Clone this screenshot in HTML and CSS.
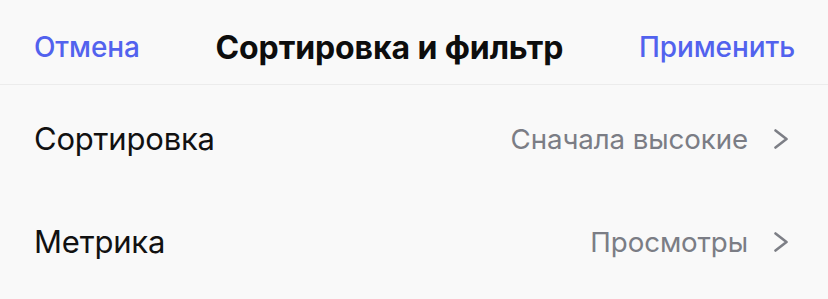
FILE: index.html
```html
<!DOCTYPE html>
<html lang="ru">
<head>
<meta charset="utf-8">
<link rel="stylesheet" href="styles.css">
</head>
<body>
<div class="sheet">
  <header class="nav">
    <span class="nav-btn">Отмена</span>
    <span class="nav-title">Сортировка и фильтр</span>
    <span class="nav-btn">Применить</span>
  </header>
  <div class="list">
    <div class="row">
      <span class="row-label">Сортировка</span>
      <span class="row-value">Сначала высокие
        <svg class="chev" viewBox="0 0 16 20" width="16" height="20"><path d="M2.5 1.5 L13.5 10 L2.5 18.5" fill="none" stroke="#7d7f86" stroke-width="2.6" stroke-linecap="round" stroke-linejoin="round"/></svg>
      </span>
    </div>
    <div class="row">
      <span class="row-label">Метрика</span>
      <span class="row-value">Просмотры
        <svg class="chev" viewBox="0 0 16 20" width="16" height="20"><path d="M2.5 1.5 L13.5 10 L2.5 18.5" fill="none" stroke="#7d7f86" stroke-width="2.6" stroke-linecap="round" stroke-linejoin="round"/></svg>
      </span>
    </div>
  </div>
</div>
</body>
</html>
```

FILE: styles.css
```css
html, body {
  margin: 0;
  padding: 0;
  background: #f9f9f9;
}
body {
  font-family: Inter, "Noto Sans", "Liberation Sans", sans-serif;
  width: 828px;
  height: 299px;
  overflow: hidden;
}
.sheet {
  display: flex;
  flex-direction: column;
}
.nav {
  height: 85px;
  box-sizing: border-box;
  display: flex;
  align-items: center;
  justify-content: space-between;
  padding: 10px 33px 0 34px;
  border-bottom: 1px solid #ececec;
}
.nav-btn {
  color: #5262ee;
  font-size: 28px;
  font-weight: 500;
  letter-spacing: -0.1px;
}
.nav-title {
  color: #0d0d0d;
  font-size: 32px;
  font-weight: 700;
  letter-spacing: -0.1px;
}
.list {
  display: flex;
  flex-direction: column;
  padding-top: 2px;
}
.row {
  height: 103px;
  display: flex;
  align-items: center;
  justify-content: space-between;
  padding: 0 39px 0 34px;
}
.row-label {
  color: #111;
  font-size: 31px;
  font-weight: 400;
  letter-spacing: -0.2px;
}
.row-value {
  display: flex;
  align-items: center;
  gap: 25px;
  color: #7b7d85;
  font-size: 27.7px;
  letter-spacing: -0.1px;
}
.chev {
  display: block;
}
```
